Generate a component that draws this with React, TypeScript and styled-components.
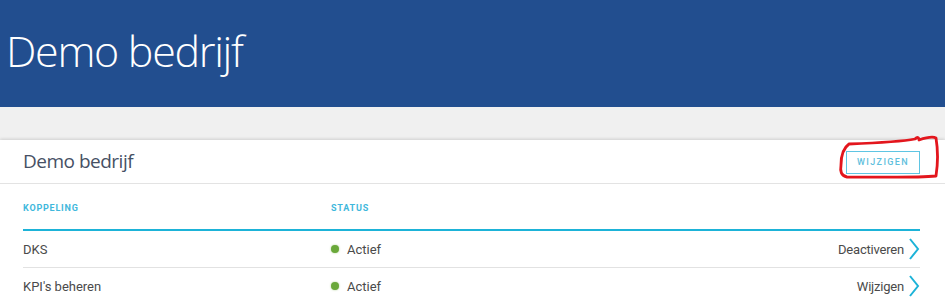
import styled, { createGlobalStyle } from 'styled-components';

const GlobalStyle = createGlobalStyle`
  html, body {
    margin: 0;
    padding: 0;
    background: #f0f0f0;
    font-family: Roboto, "Liberation Sans", sans-serif;
  }
`;

const Page = styled.div`
  width: 945px;
  height: 304px;
  overflow: hidden;
  background: #f0f0f0;
`;

const Banner = styled.header`
  height: 107px;
  background: #224e8f;
  display: flex;
  align-items: center;
  padding-left: 6px;
`;

const BannerTitle = styled.h1`
  margin: 0 0 6px;
  font-family: "Open Sans", "Noto Sans", sans-serif;
  font-weight: 300;
  font-size: 43px;
  color: #fff;
  letter-spacing: -1.3px;
`;

const Card = styled.section`
  position: relative;
  margin-top: 33px;
  background: #fff;
  box-shadow: 0 -1px 3px rgba(0, 0, 0, 0.14);
`;

const CardHead = styled.div`
  height: 43px;
  display: flex;
  align-items: center;
  justify-content: space-between;
  padding: 0 25px 0 23px;
  border-bottom: 1px solid #e3e3e3;
`;

const CardTitle = styled.h2`
  margin: 0 0 2px;
  font-family: "Open Sans", "Noto Sans", sans-serif;
  font-weight: 400;
  font-size: 19px;
  letter-spacing: -0.5px;
  color: #465064;
`;

const OutlineButton = styled.button`
  width: 74px;
  height: 23px;
  margin-top: 1px;
  border: 1px solid #5fc5e3;
  background: #fff;
  color: #5fbfdd;
  font-family: Roboto, "Liberation Sans", sans-serif;
  font-size: 9px;
  font-weight: 500;
  letter-spacing: 1.4px;
  padding: 0;
`;

const Table = styled.div`
  padding: 0 25px 0 23px;
`;

const Row = styled.div<{ $head?: boolean }>`
  display: grid;
  grid-template-columns: 308px 1fr auto;
  align-items: center;
  height: ${(p) => (p.$head ? '45px' : '36px')};
  border-bottom: ${(p) => (p.$head ? '2px solid #1db3d8' : '1px solid #e2e2e2')};
  font-size: 13px;
  color: #4a4a4a;
`;

const HeadCell = styled.span`
  font-size: 9px;
  font-weight: 700;
  letter-spacing: 0.8px;
  color: #3fb8dc;
  padding-top: 2px;
`;

const Status = styled.span`
  display: flex;
  align-items: center;
  gap: 8px;
`;

const Dot = styled.span`
  width: 8px;
  height: 8px;
  border-radius: 50%;
  background: #6aa83a;
  box-shadow: 0 0 2px rgba(106, 168, 58, 0.6);
`;

const Action = styled.span`
  display: flex;
  align-items: center;
  gap: 4px;
  color: #4a4a4a;
  letter-spacing: -0.2px;
`;

const Annotation = styled.svg`
  position: absolute;
  left: 835px;
  top: -5px;
  overflow: visible;
  pointer-events: none;
`;

const Chevron = () => (
  <svg width="12" height="22" viewBox="0 0 12 22">
    <polyline points="2,1 10,11 2,21" fill="none" stroke="#1db3d8" strokeWidth="2" />
  </svg>
);

const rows = [
  { name: 'DKS', status: 'Actief', action: 'Deactiveren' },
  { name: "KPI's beheren", status: 'Actief', action: 'Wijzigen' },
];

export default function App() {
  return (
    <Page>
      <GlobalStyle />
      <Banner>
        <BannerTitle>Demo bedrijf</BannerTitle>
      </Banner>
      <Card>
        <CardHead>
          <CardTitle>Demo bedrijf</CardTitle>
          <OutlineButton>WIJZIGEN</OutlineButton>
        </CardHead>
        <Table>
          <Row $head>
            <HeadCell>KOPPELING</HeadCell>
            <HeadCell>STATUS</HeadCell>
            <span />
          </Row>
          {rows.map((r) => (
            <Row key={r.name}>
              <span>{r.name}</span>
              <Status>
                <Dot />
                {r.status}
              </Status>
              <Action>
                {r.action}
                <Chevron />
              </Action>
            </Row>
          ))}
        </Table>
        {/* red hand-drawn marker around the button */}
        <Annotation width="110" height="50">
          <path
            d="M14 9 C40 8 70 6 80 4 C83 1 84 3 84 5 C90 3 97 1 101 3 C103 15 103 28 101 41 C80 43 40 42 12 42 C6 41 5 36 6 30 C6 22 7 14 14 9"
            fill="none"
            stroke="#e3161d"
            strokeWidth="2.8"
            strokeLinecap="round"
            strokeLinejoin="round"
          />
        </Annotation>
      </Card>
    </Page>
  );
}
